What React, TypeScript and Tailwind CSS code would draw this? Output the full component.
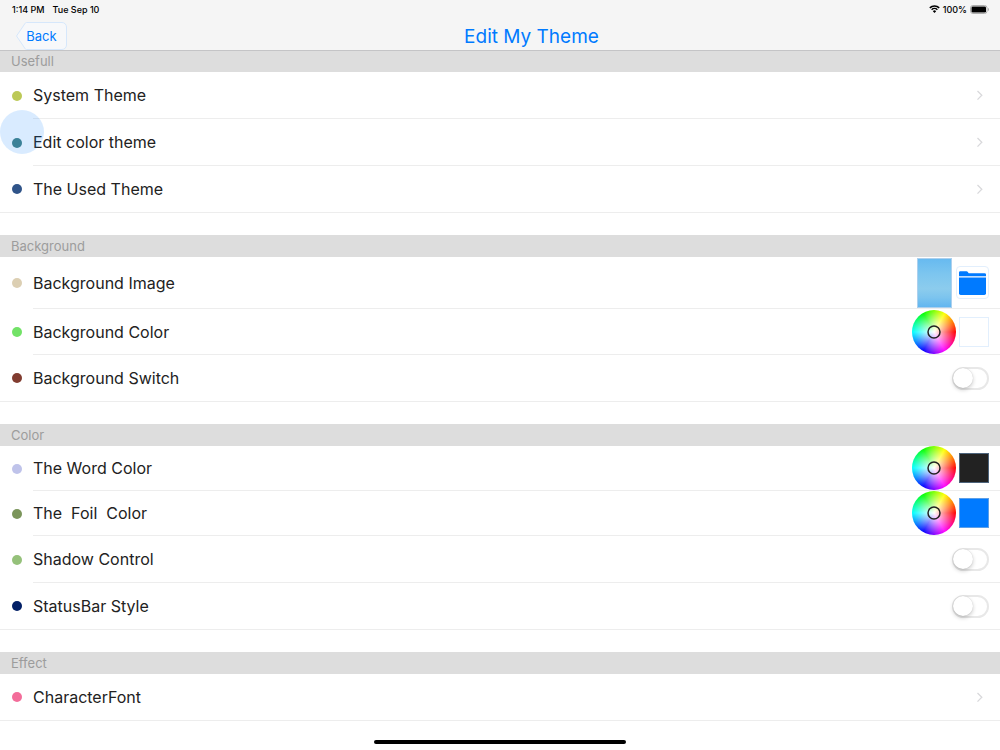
import { useId } from 'react';
import type { ReactNode } from 'react';

function StatusBar() {
  return (
    <div className="flex h-[18px] items-center justify-between pr-[11px] pl-3 text-[9px] leading-none font-medium text-black">
      <div className="flex gap-2">
        <span>1:14 PM</span>
        <span>Tue Sep 10</span>
      </div>
      <div className="flex items-center gap-[3px]">
        <svg viewBox="0 0 20 15" className="h-2 w-[11px]" aria-label="Wi-Fi" role="img">
          <path d="M1.2 5.4a12.5 12.5 0 0 1 17.6 0" fill="none" stroke="#000" strokeWidth="2.8" />
          <path d="M4.6 8.900a7.700 7.700 0 0 1 10.800 0" fill="none" stroke="#000" strokeWidth="2.600" />
          <path d="M10 14.800 6.900 11.600a4.400 4.400 0 0 1 6.200 0z" fill="#000" />
        </svg>
        <span>100%</span>
        <svg viewBox="0 0 19 9" className="h-[9px] w-[19px]" aria-label="Battery full" role="img">
          <rect x="0.5" y="0.5" width="16.500" height="8" rx="2.400" fill="#fff" stroke="#adadad" />
          <rect x="1.500" y="1.500" width="14.500" height="6" rx="1.200" fill="#000" />
          <path d="M18 3v3c.7-.2 1-.8 1-1.500S18.700 3.200 18 3z" fill="#adadad" />
        </svg>
      </div>
    </div>
  );
}

function NavBar() {
  return (
    <div className="flex h-8 items-center pt-1 pr-1 pl-4">
      <button
        type="button"
        className="relative h-7 w-[51px] shrink-0 pt-px text-[13px] text-[#007aff]"
      >
        <svg viewBox="0 0 51 28" className="absolute inset-0 h-7 w-[51px]" aria-hidden="true">
          <path
            d="M10.500 .5H46a4.500 4.500 0 0 1 4.500 4.500V23a4.500 4.500 0 0 1-4.500 4.500H10.500Q9.500 27.500 9 26.500L.5 14 9 1.500Q9.500 .5 10.500 .5z"
            fill="#f7f8fa"
            stroke="#d6e7fb"
          />
        </svg>
        <span className="relative">Back</span>
      </button>
      <h1 className="flex-1 pt-0.5 text-center text-[19px] leading-6 text-[#007aff]">
        Edit My Theme
      </h1>
    </div>
  );
}

function Section({ title, children }: { title: string; children: ReactNode }) {
  return (
    <section>
      <h2 className="flex h-[22px] items-center bg-[#dddddd] pl-[11px] text-[13px] leading-none text-[#9c9c9c]">
        {title}
      </h2>
      <ul>{children}</ul>
    </section>
  );
}

type RowProps = {
  label: ReactNode;
  dot: string;
  height?: string;
  touched?: boolean;
  children: ReactNode;
};

function Row({ label, dot, height = 'h-[47px]', touched = false, children }: RowProps) {
  return (
    <li
      className={`${height} relative flex items-center gap-[11px] border-[#ededed] pl-3 last:border-b last:*:border-b-0`}
    >
      <span className={`size-[10px] shrink-0 rounded-full ${dot}`} />
      <div className="flex h-full min-w-0 flex-1 items-center justify-between border-b border-[#ededed] pr-[11px] text-base leading-5 text-[#222222]">
        {label}
        <div className="flex items-center">{children}</div>
      </div>
      {touched && (
        <span className="pointer-events-none absolute -top-[9px] left-0 size-11 rounded-full bg-[#007aff]/15" />
      )}
    </li>
  );
}

function LinkRow({ label, dot, touched }: { label: string; dot: string; touched?: boolean }) {
  return (
    <Row
      dot={dot}
      touched={touched}
      label={
        <a href="#" className="flex h-full flex-1 items-center">
          {label}
        </a>
      }
    >
      <svg viewBox="0 0 8 12" className="mr-[5px] h-3 w-2" aria-hidden="true">
        <path d="M1.500 2 5.800 6.300l-4.300 4.300" fill="none" stroke="#d9d9dc" strokeWidth="1.300" />
      </svg>
    </Row>
  );
}

function SwitchRow({ label, dot }: { label: string; dot: string }) {
  const id = useId();
  return (
    <Row dot={dot} label={<label htmlFor={id}>{label}</label>}>
      <input
        id={id}
        type="checkbox"
        role="switch"
        className="flex h-[23px] w-[37px] appearance-none items-center rounded-full border-2 border-[#e8e8e8] bg-white before:-ml-px before:size-5 before:rounded-full before:bg-white before:shadow-[0_2px_4px_rgba(0,0,0,0.2),0_0_1px_rgba(0,0,0,0.2)] checked:justify-end checked:border-[#007aff] checked:bg-[#007aff]"
      />
    </Row>
  );
}

function ColorRow(props: {
  label: string;
  dot: string;
  height: string;
  swatch: string;
}) {
  return (
    <Row
      dot={props.dot}
      height={props.height}
      label={<span className="whitespace-pre">{props.label}</span>}
    >
      <div className="flex items-center gap-[3px]">
        <button
          type="button"
          aria-label={`Pick ${props.label}`}
          className="flex size-11 items-center justify-center rounded-full bg-[radial-gradient(circle_closest-side,#fff_0%,rgba(255,255,255,0)_100%),conic-gradient(from_90deg,#f00,#f0f,#00f,#0ff,#0f0,#ff0,#f00)]"
        >
          <svg viewBox="0 0 14 14" className="size-[14px]" aria-hidden="true">
            <circle cx="7" cy="7" r="6" fill="none" stroke="#222222" strokeWidth="1.500" />
          </svg>
        </button>
        <button
          type="button"
          aria-label={`Current ${props.label}`}
          className={`size-[30px] border ${props.swatch}`}
        />
      </div>
    </Row>
  );
}

export default function App() {
  return (
    <div className="relative min-h-screen bg-white font-['Inter',sans-serif]">
      <header className="relative z-10 bg-[#f5f5f5] shadow-[0_1px_0_#c4c4c6]">
        <StatusBar />
        <NavBar />
      </header>

      <main className="flex flex-col gap-[22px]">
        <Section title="Usefull">
          <LinkRow label="System Theme" dot="bg-[#bcc957]" />
          <LinkRow label="Edit color theme" dot="bg-[#458386]" touched />
          <LinkRow label="The Used Theme" dot="bg-[#305489]" />
        </Section>

        <Section title="Background">
          <Row label="Background Image" dot="bg-[#dccfb3]" height="h-[52px]">
            <div className="flex items-center gap-1">
              <div className="h-[50px] w-[35px] border border-[#acd0ee] bg-[linear-gradient(180deg,#67baf0_0%,#7cc5ef_30%,#8ccced_62%,#7cc4ee_80%,#62b6f0_100%)]" />
              <button
                type="button"
                aria-label="Choose image"
                className="flex size-[33px] items-center justify-center rounded-[4px] border border-[#e2effd] bg-white"
              >
                <svg viewBox="0 0 27 24" className="mt-px mr-px h-6 w-[27px]" aria-hidden="true">
                  <path
                    d="M0 5.300V1.500Q0 .2 1.300 .2H7.500Q8.300 .2 8.800 .9L9.700 2.200H25.500Q27 2.200 27 3.600V5.300z"
                    fill="#007aff"
                  />
                  <path d="M0 6.400H27V22.300Q27 24 25.300 24H1.700Q0 24 0 22.300z" fill="#007aff" />
                </svg>
              </button>
            </div>
          </Row>
          <ColorRow
            label="Background Color"
            dot="bg-[#72e267]"
            height="h-[46px]"
            swatch="border-[#e2effd] bg-white"
          />
          <SwitchRow label="Background Switch" dot="bg-[#813c30]" />
        </Section>

        <Section title="Color">
          <ColorRow
            label="The Word Color"
            dot="bg-[#bfc3ea]"
            height="h-[45px]"
            swatch="border-[#4d647c] bg-[#222222]"
          />
          <ColorRow
            label="The  Foil  Color"
            dot="bg-[#7b955b]"
            height="h-[45px]"
            swatch="border-[#5c9fe8] bg-[#007aff]"
          />
          <SwitchRow label="Shadow Control" dot="bg-[#95c17a]" />
          <SwitchRow label="StatusBar Style" dot="bg-[#021f66]" />
        </Section>

        <Section title="Effect">
          <LinkRow label="CharacterFont" dot="bg-[#f36d9a]" />
        </Section>
      </main>

      <div className="fixed bottom-[6px] left-1/2 z-20 h-1 w-[252px] -translate-x-1/2 rounded-full bg-black" />
    </div>
  );
}
